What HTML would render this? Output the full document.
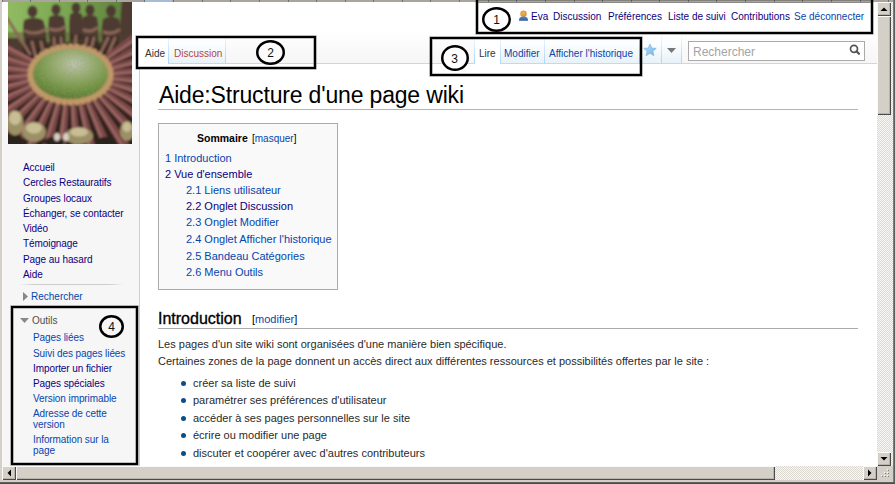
<!DOCTYPE html>
<html><head><meta charset="utf-8">
<style>
*{margin:0;padding:0;box-sizing:border-box}
html,body{width:895px;height:484px;overflow:hidden;background:#fff}
body{position:relative;font-family:"Liberation Sans",sans-serif;color:#222}
.a{position:absolute;white-space:nowrap}
a,.l{color:#0645ad;text-decoration:none}
.v{color:#0b0080}
.new{color:#ba0000}
#sidebar{position:absolute;left:2px;top:2px;width:137px;height:464px;background:#f6f6f6}
#headgrad{position:absolute;left:139px;top:2px;width:738px;height:61px;background:linear-gradient(#fff 0,#fff 45%,#f6f6f6 100%)}
#content{position:absolute;left:139px;top:63px;width:738px;height:403px;background:#fff;}
.box{position:absolute;border:2px solid #000;box-shadow:0 0 0 .6px rgba(0,0,0,.45),inset 0 0 0 .6px rgba(0,0,0,.45)}
.circ{position:absolute;border:2px solid #000;border-radius:50%;background:#fff;font-size:13px;color:#000;text-align:center}
.p{font-size:10px}
.nav{font-size:10px;color:#0b0080}
.ct{color:#2a2a2a}
.tab{position:absolute;top:33px;height:30px;background:linear-gradient(#fff 0%,#fbfdfe 40%,#e8f2f8 100%)}
.sep{position:absolute;top:33px;width:1px;height:30px;background:linear-gradient(rgba(167,215,249,0),#a7d7f9)}
.toc{font-size:11px}
.btn{background:#d4d0c8;box-shadow:inset 1px 1px #fbfaf7,inset -1px -1px #4a4a4a,inset -2px -2px #b8b4ac}
.btn svg{display:block}
</style></head><body>
<!-- top strip -->
<div class="a" style="left:0;top:0;width:895px;height:2px;background:#a9a59e"></div>
<div class="a" style="left:145px;top:0;width:27px;height:2px;background:#a8bcd8"></div><div class="a" style="left:2px;top:0;width:1px;height:2px;background:#707070"></div><div class="a" style="left:30px;top:0;width:1px;height:2px;background:#707070"></div><div class="a" style="left:59px;top:0;width:1px;height:2px;background:#707070"></div><div class="a" style="left:87px;top:0;width:1px;height:2px;background:#707070"></div><div class="a" style="left:116px;top:0;width:1px;height:2px;background:#707070"></div><div class="a" style="left:144px;top:0;width:1px;height:2px;background:#707070"></div><div class="a" style="left:173px;top:0;width:1px;height:2px;background:#707070"></div><div class="a" style="left:202px;top:0;width:1px;height:2px;background:#707070"></div><div class="a" style="left:230px;top:0;width:1px;height:2px;background:#707070"></div><div class="a" style="left:259px;top:0;width:1px;height:2px;background:#707070"></div><div class="a" style="left:288px;top:0;width:1px;height:2px;background:#707070"></div><div class="a" style="left:316px;top:0;width:1px;height:2px;background:#707070"></div><div class="a" style="left:345px;top:0;width:1px;height:2px;background:#707070"></div><div class="a" style="left:373px;top:0;width:1px;height:2px;background:#707070"></div><div class="a" style="left:402px;top:0;width:1px;height:2px;background:#707070"></div><div class="a" style="left:430px;top:0;width:1px;height:2px;background:#707070"></div><div class="a" style="left:459px;top:0;width:1px;height:2px;background:#707070"></div><div class="a" style="left:488px;top:0;width:1px;height:2px;background:#707070"></div><div class="a" style="left:516px;top:0;width:1px;height:2px;background:#707070"></div><div class="a" style="left:545px;top:0;width:1px;height:2px;background:#707070"></div><div class="a" style="left:574px;top:0;width:1px;height:2px;background:#707070"></div><div class="a" style="left:602px;top:0;width:1px;height:2px;background:#707070"></div><div class="a" style="left:631px;top:0;width:1px;height:2px;background:#707070"></div><div class="a" style="left:659px;top:0;width:1px;height:2px;background:#707070"></div><div class="a" style="left:688px;top:0;width:1px;height:2px;background:#707070"></div><div class="a" style="left:716px;top:0;width:1px;height:2px;background:#707070"></div><div class="a" style="left:745px;top:0;width:1px;height:2px;background:#707070"></div><div class="a" style="left:774px;top:0;width:1px;height:2px;background:#707070"></div><div class="a" style="left:802px;top:0;width:1px;height:2px;background:#707070"></div><div class="a" style="left:831px;top:0;width:1px;height:2px;background:#707070"></div><div class="a" style="left:860px;top:0;width:1px;height:2px;background:#707070"></div><div class="a" style="left:888px;top:0;width:1px;height:2px;background:#707070"></div>
<!-- left frame -->
<div class="a" style="left:0;top:0;width:2px;height:484px;background:#d4d0c8"></div>

<div id="sidebar"></div>
<div class="a" style="left:2px;top:2px;width:137px;height:142px;background:linear-gradient(#fff 0,#fff 40%,#f6f6f6 100%)"></div>
<div id="headgrad"></div>
<div id="content"></div>
<div class="a" style="left:139px;top:68px;width:1px;height:398px;background:#b4d6f0"></div>
<div class="a" style="left:168px;top:63px;width:307px;height:1px;background:#bcdcf2"></div>
<div class="a" style="left:500px;top:63px;width:377px;height:1px;background:#bcdcf2"></div>

<!-- logo -->
<svg class="a" style="left:8px;top:2px" width="124" height="142" viewBox="0 0 124 142">
<defs>
<radialGradient id="inner" cx="55%" cy="30%" r="70%"><stop offset="0" stop-color="#bfc3b4"/><stop offset=".3" stop-color="#a0b07e"/><stop offset=".65" stop-color="#7b984e"/><stop offset="1" stop-color="#5a7a34"/></radialGradient>
<linearGradient id="topg" x1="0" y1="0" x2="1" y2="0"><stop offset="0" stop-color="#92bc62"/><stop offset=".5" stop-color="#7aa450"/><stop offset="1" stop-color="#5a7a3a"/></linearGradient>
<filter id="tex" x="0" y="0" width="100%" height="100%"><feTurbulence type="fractalNoise" baseFrequency=".45" numOctaves="2" seed="5"/><feColorMatrix type="matrix" values="0 0 0 0 .25  0 0 0 0 .4  0 0 0 0 .1  0 0 0 -1.6 1"/><feComposite in2="SourceGraphic" operator="in"/></filter>
<filter id="bl"><feGaussianBlur stdDeviation=".8"/></filter>
</defs>
<g filter="url(#bl)">
<rect x="-2" y="-2" width="128" height="146" fill="#2f211e"/>
<rect x="-2" y="-2" width="128" height="42" fill="url(#topg)"/><rect x="-2" y="30" width="128" height="14" fill="#5a5a30" opacity=".5"/>
<g fill="#4e3b33">
<ellipse cx="24.5" cy="9.5" rx="5" ry="6"/><path d="M16 18 Q25 13 35 18 Q40 30 38 46 L18 46 Q13 30 16 18Z"/>
<ellipse cx="48" cy="7.5" rx="4.6" ry="5.5"/><path d="M41 15 Q48 11 56 15 Q59 28 57 42 L42 42 Q39 28 41 15Z"/>
<ellipse cx="68" cy="6" rx="4.5" ry="5.5"/><path d="M62 12 Q68 9 74 12 Q76 25 74 38 L62 38 Q60 25 62 12Z"/>
<ellipse cx="82" cy="8" rx="4.6" ry="5.5"/><path d="M75 15 Q82 11 89 15 Q92 28 89 40 L75 40 Q72 28 75 15Z"/>
<ellipse cx="103" cy="9" rx="5" ry="6"/><path d="M95 17 Q103 12 111 17 Q114 30 111 42 L95 42 Q92 30 95 17Z"/>
<path d="M114 -2 L126 -2 L126 52 L113 52 Q111 20 114 -2Z"/>
<path d="M-2 36 L10 36 Q18 50 20 70 L-2 70Z"/>
</g>
<g fill="#3a2a24" opacity=".7"><path d="M18 36 L38 36 L40 50 L16 50Z"/><path d="M42 34 L57 34 L58 50 L42 50Z"/><path d="M62 32 L74 32 L76 50 L60 50Z"/><path d="M75 34 L90 34 L92 50 L73 50Z"/><path d="M95 34 L111 34 L113 50 L93 50Z"/></g>
<g stroke="#8a6658" stroke-width="3" stroke-linecap="round" fill="none">
<path d="M17 29 Q28 34 38 27"/><path d="M-1 16 L22 52"/><path d="M42 27 Q50 30 57 25"/><path d="M76 28 Q83 31 89 26"/><path d="M96 30 Q104 33 111 28"/>
<path d="M24 40 L28 56"/><path d="M33 40 L37 58"/><path d="M46 36 L47 56"/><path d="M53 36 L54 56"/>
<path d="M68 34 L66 52"/><path d="M79 36 L75 54"/><path d="M86 36 L81 54"/><path d="M100 36 L92 52"/><path d="M107 36 L99 54"/>
</g>
<g fill="#7c4a48"><path d="M96.3 60.1 L165.0 15.2 L159.0 6.7 L93.3 55.8Z"/><path d="M99.2 64.3 L174.3 32.5 L169.9 23.0 L97.0 59.6Z"/><path d="M101.0 68.7 L180.2 50.9 L177.6 40.9 L99.7 63.7Z"/><path d="M101.6 73.3 L182.6 70.0 L181.8 59.6 L101.2 68.1Z"/><path d="M101.0 77.8 L181.3 89.2 L182.4 78.8 L101.6 72.6Z"/><path d="M99.2 82.2 L176.4 107.8 L179.3 97.8 L100.7 77.2Z"/><path d="M96.4 86.2 L168.0 125.4 L172.7 116.1 L98.7 81.6Z"/><path d="M92.5 89.9 L156.5 141.3 L162.7 133.0 L95.6 85.7Z"/><path d="M87.7 93.0 L142.1 155.2 L149.7 148.1 L91.5 89.4Z"/><path d="M82.1 95.5 L125.2 166.5 L134.0 160.9 L86.5 92.6Z"/><path d="M76.0 97.3 L106.5 175.0 L116.1 170.9 L80.8 95.2Z"/><path d="M69.4 98.3 L86.5 180.4 L96.6 178.0 L74.5 97.1Z"/><path d="M62.6 98.6 L65.7 182.6 L76.1 181.9 L67.8 98.3Z"/><path d="M55.8 98.1 L44.8 181.4 L55.1 182.4 L61.0 98.6Z"/><path d="M49.2 96.8 L24.4 176.9 L34.4 179.6 L54.3 98.2Z"/><path d="M43.1 94.8 L5.2 169.2 L14.6 173.6 L47.8 97.0Z"/><path d="M37.4 92.0 L-12.3 158.5 L-3.8 164.5 L41.7 95.0Z"/><path d="M32.6 88.7 L-27.5 145.2 L-20.1 152.6 L36.3 92.4Z"/><path d="M28.7 84.9 L-40.0 129.8 L-34.0 138.3 L31.7 89.2Z"/><path d="M25.8 80.7 L-49.3 112.5 L-44.9 122.0 L28.0 85.4Z"/><path d="M24.0 76.3 L-55.2 94.1 L-52.6 104.1 L25.3 81.3Z"/><path d="M23.4 71.7 L-57.6 75.0 L-56.8 85.4 L23.8 76.9Z"/><path d="M24.0 67.2 L-56.3 55.8 L-57.4 66.2 L23.4 72.4Z"/><path d="M25.8 62.8 L-51.4 37.2 L-54.3 47.2 L24.3 67.8Z"/><path d="M28.6 58.8 L-43.0 19.6 L-47.7 28.9 L26.3 63.4Z"/></g>
<g stroke="#a8746e" stroke-width="2" stroke-linecap="round" fill="none" opacity=".85"><path d="M95.4 58.8 L163.2 12.8"/><path d="M98.5 62.8 L173.0 29.8"/><path d="M100.6 67.2 L179.5 48.0"/><path d="M101.5 71.7 L182.4 67.0"/><path d="M101.2 76.2 L181.6 86.2"/><path d="M99.7 80.6 L177.2 104.9"/><path d="M97.1 84.8 L169.4 122.7"/><path d="M93.4 88.6 L158.3 138.9"/><path d="M88.9 91.9 L144.2 153.1"/><path d="M83.5 94.6 L127.8 164.9"/><path d="M77.4 96.6 L109.3 173.9"/><path d="M71.0 98.0 L89.4 179.7"/><path d="M64.2 98.5 L68.7 182.4"/><path d="M57.4 98.3 L47.8 181.7"/><path d="M50.8 97.2 L27.3 177.7"/><path d="M44.5 95.4 L7.9 170.4"/><path d="M38.8 93.0 L-9.8 160.2"/><path d="M33.7 89.9 L-25.4 147.4"/><path d="M29.6 86.2 L-38.2 132.2"/><path d="M26.5 82.2 L-48.0 115.2"/><path d="M24.4 77.8 L-54.5 97.0"/><path d="M23.5 73.3 L-57.4 78.0"/><path d="M23.8 68.8 L-56.6 58.8"/><path d="M25.3 64.4 L-52.2 40.1"/><path d="M27.9 60.2 L-44.4 22.3"/></g>
<ellipse cx="62.5" cy="72.5" rx="42.5" ry="29.5" fill="#a47a50"/>
<g fill="#bf9868"><ellipse cx="102.5" cy="72.5" rx="3.2" ry="3.8"/><ellipse cx="102.0" cy="76.8" rx="3.2" ry="3.8"/><ellipse cx="100.5" cy="80.9" rx="3.2" ry="3.8"/><ellipse cx="98.1" cy="84.9" rx="3.2" ry="3.8"/><ellipse cx="94.9" cy="88.5" rx="3.2" ry="3.8"/><ellipse cx="90.8" cy="91.8" rx="3.2" ry="3.8"/><ellipse cx="86.0" cy="94.6" rx="3.2" ry="3.8"/><ellipse cx="80.7" cy="96.8" rx="3.2" ry="3.8"/><ellipse cx="74.9" cy="98.5" rx="3.2" ry="3.8"/><ellipse cx="68.8" cy="99.5" rx="3.2" ry="3.8"/><ellipse cx="62.5" cy="99.8" rx="3.2" ry="3.8"/><ellipse cx="56.2" cy="99.5" rx="3.2" ry="3.8"/><ellipse cx="50.1" cy="98.5" rx="3.2" ry="3.8"/><ellipse cx="44.3" cy="96.8" rx="3.2" ry="3.8"/><ellipse cx="39.0" cy="94.6" rx="3.2" ry="3.8"/><ellipse cx="34.2" cy="91.8" rx="3.2" ry="3.8"/><ellipse cx="30.1" cy="88.5" rx="3.2" ry="3.8"/><ellipse cx="26.9" cy="84.9" rx="3.2" ry="3.8"/><ellipse cx="24.5" cy="80.9" rx="3.2" ry="3.8"/><ellipse cx="23.0" cy="76.8" rx="3.2" ry="3.8"/><ellipse cx="22.5" cy="72.5" rx="3.2" ry="3.8"/><ellipse cx="23.0" cy="68.2" rx="3.2" ry="3.8"/><ellipse cx="24.5" cy="64.1" rx="3.2" ry="3.8"/><ellipse cx="26.9" cy="60.1" rx="3.2" ry="3.8"/><ellipse cx="30.1" cy="56.5" rx="3.2" ry="3.8"/><ellipse cx="34.2" cy="53.2" rx="3.2" ry="3.8"/><ellipse cx="39.0" cy="50.4" rx="3.2" ry="3.8"/><ellipse cx="44.3" cy="48.2" rx="3.2" ry="3.8"/><ellipse cx="50.1" cy="46.5" rx="3.2" ry="3.8"/><ellipse cx="56.2" cy="45.5" rx="3.2" ry="3.8"/><ellipse cx="62.5" cy="45.2" rx="3.2" ry="3.8"/><ellipse cx="68.8" cy="45.5" rx="3.2" ry="3.8"/><ellipse cx="74.9" cy="46.5" rx="3.2" ry="3.8"/><ellipse cx="80.7" cy="48.2" rx="3.2" ry="3.8"/><ellipse cx="86.0" cy="50.4" rx="3.2" ry="3.8"/><ellipse cx="90.8" cy="53.2" rx="3.2" ry="3.8"/><ellipse cx="94.9" cy="56.5" rx="3.2" ry="3.8"/><ellipse cx="98.1" cy="60.1" rx="3.2" ry="3.8"/><ellipse cx="100.5" cy="64.1" rx="3.2" ry="3.8"/><ellipse cx="102.0" cy="68.2" rx="3.2" ry="3.8"/></g>
<ellipse cx="62.5" cy="72" rx="37.5" ry="25" fill="url(#inner)"/>

<g fill="#2a201c">
<ellipse cx="5" cy="138" rx="9" ry="8"/><ellipse cx="46" cy="140" rx="10" ry="5"/><ellipse cx="98" cy="140" rx="10" ry="5"/>
</g>
<g fill="#9c9066">
<ellipse cx="7" cy="121" rx="8.5" ry="12.5"/>
<ellipse cx="26" cy="130" rx="12" ry="10"/>
<ellipse cx="71" cy="134" rx="14" ry="8.5"/>
<ellipse cx="119" cy="129" rx="7" ry="10"/>
</g>
<g fill="#c8bd93">
<ellipse cx="7" cy="116" rx="6" ry="7"/>
<ellipse cx="26" cy="126" rx="8" ry="5.5"/>
<ellipse cx="71" cy="130" rx="9" ry="4.5"/>
<ellipse cx="119" cy="125" rx="4.5" ry="5"/>
</g>
<g fill="#d8cfc2"><ellipse cx="49" cy="135" rx="3" ry="4"/><ellipse cx="58" cy="135" rx="3" ry="4"/></g>
</g>
<ellipse cx="62.5" cy="72" rx="36.5" ry="24" fill="#000" filter="url(#tex)" opacity=".45"/></svg>

<!-- personal tools -->
<svg class="a" style="left:518px;top:10px" width="11" height="12" viewBox="0 0 11 12"><defs><radialGradient id="hd" cx="45%" cy="40%" r="60%"><stop offset="0" stop-color="#f2b850"/><stop offset="1" stop-color="#d48a30"/></radialGradient><linearGradient id="bd" x1="0" y1="0" x2="0" y2="1"><stop offset="0" stop-color="#5a8ac8"/><stop offset="1" stop-color="#2f5a98"/></linearGradient></defs><circle cx="5.5" cy="3.8" r="3.2" fill="url(#hd)"/><path d="M1 10.8 Q0.6 6.4 5.5 6.4 Q10.4 6.4 10 10.8Z" fill="url(#bd)"/></svg>
<div class="a p v" style="left:531px;top:11px">Eva</div>
<div class="a p v" style="left:553px;top:11px">Discussion</div>
<div class="a p v" style="left:608px;top:11px">Préférences</div>
<div class="a p v" style="left:668px;top:11px">Liste de suivi</div>
<div class="a p v" style="left:731px;top:11px">Contributions</div>
<div class="a p" style="left:794px;top:11px;color:#0645ad">Se déconnecter</div>

<!-- left tabs -->
<div class="tab" style="left:139px;width:29px;background:#fff"></div>
<div class="tab" style="left:169px;width:56px"></div>
<div class="sep" style="left:168px"></div>
<div class="sep" style="left:225px"></div>
<div class="a p" style="left:145px;top:48px;color:#333">Aide</div>
<div class="a p new" style="left:174px;top:48px;color:#b24444">Discussion</div>

<!-- right tabs -->
<div class="tab" style="left:475px;width:25px;background:#fff"></div>
<div class="tab" style="left:501px;width:43px"></div>
<div class="tab" style="left:545px;width:94px"></div>
<div class="tab" style="left:640px;width:21px"></div>
<div class="tab" style="left:662px;width:19px"></div>
<div class="sep" style="left:474px"></div>
<div class="sep" style="left:500px"></div>
<div class="sep" style="left:544px"></div>
<div class="sep" style="left:639px"></div>
<div class="sep" style="left:661px"></div>
<div class="sep" style="left:681px"></div>
<div class="a p" style="left:479px;top:48px;color:#333">Lire</div>
<div class="a p l" style="left:504px;top:48px">Modifier</div>
<div class="a p l" style="left:549px;top:48px">Afficher l'historique</div>
<svg class="a" style="left:643px;top:43px" width="14" height="14" viewBox="0 0 14 14"><defs><linearGradient id="stg" x1="0" y1="0" x2="1" y2="1"><stop offset="0" stop-color="#c8e4fa"/><stop offset=".6" stop-color="#8ac4f0"/><stop offset="1" stop-color="#6ab0e8"/></linearGradient></defs><path d="M7 1 L8.8 5.1 L13.2 5.4 L9.8 8.3 L10.9 12.7 L7 10.3 L3.1 12.7 L4.2 8.3 L0.8 5.4 L5.2 5.1 Z" fill="url(#stg)" stroke="#7ab4e0" stroke-width=".7" stroke-linejoin="round"/></svg>
<svg class="a" style="left:667px;top:48px" width="9" height="5" viewBox="0 0 9 5"><path d="M0 0 L9 0 L4.5 5Z" fill="#777"/></svg>
<!-- search -->
<div class="a" style="left:688px;top:41px;width:177px;height:20px;border:1px solid #aaa;background:#fff"></div>
<div class="a" style="left:693px;top:45px;font-size:12px;color:#a4a4a4">Rechercher</div>
<svg class="a" style="left:849px;top:44px" width="12" height="12" viewBox="0 0 12 12"><circle cx="5" cy="4.8" r="3.5" fill="none" stroke="#555" stroke-width="1.7"/><path d="M7.6 7.4 L10 9.8" stroke="#555" stroke-width="2.2" stroke-linecap="round"/></svg>

<!-- title -->
<div class="a" style="left:159px;top:82px;font-size:23px;letter-spacing:-0.17px;color:#000">Aide:Structure d'une page wiki</div>
<div class="a" style="left:158px;top:109px;width:700px;height:1px;background:#b4b4b4"></div>

<!-- TOC -->
<div class="a" style="left:158px;top:123px;width:180px;height:167px;border:1px solid #aaa;background:#f9f9f9"></div>
<div class="a" style="left:197px;top:132px;font-size:10.5px;font-weight:bold;color:#000">Sommaire</div>
<div class="a" style="left:252px;top:133px;font-size:10px;color:#000">[<span class="l">masquer</span>]</div>
<div class="a toc" style="left:165px;top:152px"><span class="l">1 Introduction</span></div>
<div class="a toc" style="left:165px;top:168px"><span class="v">2 Vue d'ensemble</span></div>
<div class="a toc" style="left:186px;top:184px"><span class="l">2.1 Liens utilisateur</span></div>
<div class="a toc" style="left:186px;top:200px"><span class="v">2.2 Onglet Discussion</span></div>
<div class="a toc" style="left:186px;top:216px"><span class="l">2.3 Onglet Modifier</span></div>
<div class="a toc" style="left:186px;top:233px"><span class="l">2.4 Onglet Afficher l'historique</span></div>
<div class="a toc" style="left:186px;top:250px"><span class="l">2.5 Bandeau Catégories</span></div>
<div class="a toc" style="left:186px;top:266px"><span class="l">2.6 Menu Outils</span></div>

<!-- Introduction -->
<div class="a" style="left:158px;top:310px;font-size:16px;color:#000;-webkit-text-stroke:.35px #000">Introduction</div>
<div class="a" style="left:252px;top:313px;font-size:11px;color:#000">[<span class="l">modifier</span>]</div>
<div class="a" style="left:158px;top:328px;width:700px;height:1px;background:#aaa"></div>
<div class="a ct" style="left:158px;top:338px;font-size:11px">Les pages d'un site wiki sont organisées d'une manière bien spécifique.</div>
<div class="a ct" style="left:158px;top:355px;font-size:11px">Certaines zones de la page donnent un accès direct aux différentes ressources et possibilités offertes par le site :</div>
<div class="a ct" style="left:193px;top:375px;font-size:11px;line-height:17.4px">créer sa liste de suivi<br>paramétrer ses préférences d'utilisateur<br>accéder à ses pages personnelles sur le site<br>écrire ou modifier une page<br>discuter et coopérer avec d'autres contributeurs<br>gérer les ...</div>
<div class="a" style="left:181px;top:381px">
<div style="width:5px;height:5px;border-radius:50%;background:#0b4f8a;margin-bottom:12.4px"></div>
<div style="width:5px;height:5px;border-radius:50%;background:#0b4f8a;margin-bottom:12.4px"></div>
<div style="width:5px;height:5px;border-radius:50%;background:#0b4f8a;margin-bottom:12.4px"></div>
<div style="width:5px;height:5px;border-radius:50%;background:#0b4f8a;margin-bottom:12.4px"></div>
<div style="width:5px;height:5px;border-radius:50%;background:#0b4f8a;margin-bottom:12.4px"></div>
</div>

<!-- sidebar nav -->
<div class="a nav" style="left:23px;top:162px;letter-spacing:-0.08px">Accueil</div>
<div class="a nav" style="left:23px;top:177px;letter-spacing:-0.08px">Cercles Restauratifs</div>
<div class="a nav" style="left:23px;top:193px;letter-spacing:-0.08px">Groupes locaux</div>
<div class="a nav" style="left:23px;top:208px;letter-spacing:-0.08px">Échanger, se contacter</div>
<div class="a nav" style="left:23px;top:223px;letter-spacing:-0.08px">Vidéo</div>
<div class="a nav" style="left:23px;top:238px;letter-spacing:-0.08px">Témoignage</div>
<div class="a nav" style="left:23px;top:254px;letter-spacing:-0.08px">Page au hasard</div>
<div class="a nav" style="left:23px;top:269px;letter-spacing:-0.08px">Aide</div>
<div class="a" style="left:19px;top:284px;width:105px;height:1px;background:linear-gradient(90deg,#f6f6f6,#ccc 15%,#ccc 85%,#f6f6f6)"></div>
<svg class="a" style="left:23px;top:292px" width="5" height="9" viewBox="0 0 5 9"><path d="M0 0 L5 4.5 L0 9Z" fill="#888"/></svg>
<div class="a p" style="left:31px;top:291px;color:#0645ad">Rechercher</div>
<svg class="a" style="left:20px;top:318px" width="9" height="5" viewBox="0 0 9 5"><path d="M0 0 L9 0 L4.5 5Z" fill="#888"/></svg>
<div class="a p" style="left:32px;top:315px;color:#4d4d4d">Outils</div>
<div class="a p l" style="left:33px;top:332px;letter-spacing:-0.08px">Pages liées</div>
<div class="a p l" style="left:33px;top:348px;letter-spacing:-0.08px">Suivi des pages liées</div>
<div class="a nav" style="left:33px;top:363px;letter-spacing:-0.08px">Importer un fichier</div>
<div class="a nav" style="left:33px;top:378px;letter-spacing:-0.08px">Pages spéciales</div>
<div class="a p l" style="left:33px;top:393px;letter-spacing:-0.08px">Version imprimable</div>
<div class="a p l" style="left:33px;top:408px;letter-spacing:-0.08px">Adresse de cette</div>
<div class="a p l" style="left:33px;top:419px;letter-spacing:-0.08px">version</div>
<div class="a p l" style="left:33px;top:434px;letter-spacing:-0.08px">Information sur la</div>
<div class="a p l" style="left:33px;top:445px;letter-spacing:-0.08px">page</div>

<!-- annotation boxes -->
<div class="box" style="left:476px;top:0px;width:397px;height:34px;border-top:none"></div>
<div class="a" style="left:478px;top:2px;width:393px;height:1px;background:#8a8a8a"></div>
<div class="box" style="left:136px;top:36px;width:180px;height:33px"></div>
<div class="box" style="left:430px;top:37px;width:212px;height:39px"></div>
<div class="box" style="left:11px;top:306px;width:127px;height:159px"></div>

<svg class="a" style="left:480.1px;top:4.7px" width="33" height="29" viewBox="0 0 33 29"><ellipse cx="16.5" cy="14.5" rx="13.25" ry="11.25" fill="#fff" stroke="#000" stroke-width="2.5"/><text x="16.5" y="19.3" text-anchor="middle" font-family="Liberation Sans" font-size="12" fill="#111">1</text></svg>
<svg class="a" style="left:253.5px;top:38.3px" width="33" height="29" viewBox="0 0 33 29"><ellipse cx="16.5" cy="14.5" rx="13.25" ry="11.25" fill="#fbfbfb" stroke="#000" stroke-width="2.5"/><text x="16.5" y="19.3" text-anchor="middle" font-family="Liberation Sans" font-size="12" fill="#111">2</text></svg>
<svg class="a" style="left:439.3px;top:43.4px" width="32" height="30" viewBox="0 0 32 30"><ellipse cx="16.0" cy="15.0" rx="12.75" ry="11.75" fill="#fff" stroke="#000" stroke-width="2.5"/><text x="15.5" y="19.900000000000002" text-anchor="middle" font-family="Liberation Sans" font-size="12" fill="#111">3</text></svg>
<svg class="a" style="left:96.5px;top:312.7px" width="29" height="27" viewBox="0 0 29 27"><ellipse cx="14.5" cy="13.5" rx="11.25" ry="10.25" fill="#f6f6f6" stroke="#000" stroke-width="2.5"/><text x="14.5" y="18.3" text-anchor="middle" font-family="Liberation Sans" font-size="12" fill="#111">4</text></svg>
<!-- scrollbars -->
<div class="a" style="left:877px;top:2px;width:16px;height:464px;background:repeating-conic-gradient(#f8f7f4 0 25%,#dcd9d2 0 50%) 0 0/2px 2px"></div>
<div class="a" style="left:2px;top:466px;width:875px;height:14px;background:repeating-conic-gradient(#f8f7f4 0 25%,#dcd9d2 0 50%) 0 0/2px 2px"></div>
<div class="a btn" style="left:877px;top:2px;width:14px;height:14px"><svg width="14" height="14"><path d="M3.5 9 L10.5 9 L7 5.5Z" fill="#000"/></svg></div>
<div class="a btn" style="left:877px;top:16px;width:14px;height:99px"></div>
<div class="a btn" style="left:877px;top:452px;width:14px;height:14px"><svg width="14" height="14"><path d="M3.5 5 L10.5 5 L7 8.5Z" fill="#000"/></svg></div>
<div class="a btn" style="left:2px;top:466px;width:14px;height:14px"><svg width="14" height="14"><path d="M9 3.5 L9 10.5 L5.5 7Z" fill="#000"/></svg></div>
<div class="a btn" style="left:16px;top:466px;width:759px;height:14px"></div>
<div class="a btn" style="left:863px;top:466px;width:14px;height:14px"><svg width="14" height="14"><path d="M5 3.5 L5 10.5 L8.5 7Z" fill="#000"/></svg></div>
<div class="a" style="left:877px;top:466px;width:16px;height:14px;background:#d4d0c8"><svg width="14" height="14"><g fill="#fff"><rect x="10" y="3" width="1" height="1"/><rect x="7" y="6" width="1" height="1"/><rect x="10" y="6" width="1" height="1"/><rect x="4" y="9" width="1" height="1"/><rect x="7" y="9" width="1" height="1"/><rect x="10" y="9" width="1" height="1"/></g><g fill="#808080"><rect x="11" y="4" width="1" height="1"/><rect x="8" y="7" width="1" height="1"/><rect x="11" y="7" width="1" height="1"/><rect x="5" y="10" width="1" height="1"/><rect x="8" y="10" width="1" height="1"/><rect x="11" y="10" width="1" height="1"/></g></svg></div>
<div class="a" style="left:893px;top:0;width:2px;height:484px;background:linear-gradient(90deg,#8a8a8a,#505050)"></div>
<div class="a" style="left:0;top:480px;width:893px;height:2px;background:#d4d0c8"></div>
<div class="a" style="left:0;top:482px;width:895px;height:2px;background:linear-gradient(#6a6a6a,#404040)"></div>
</body></html>
